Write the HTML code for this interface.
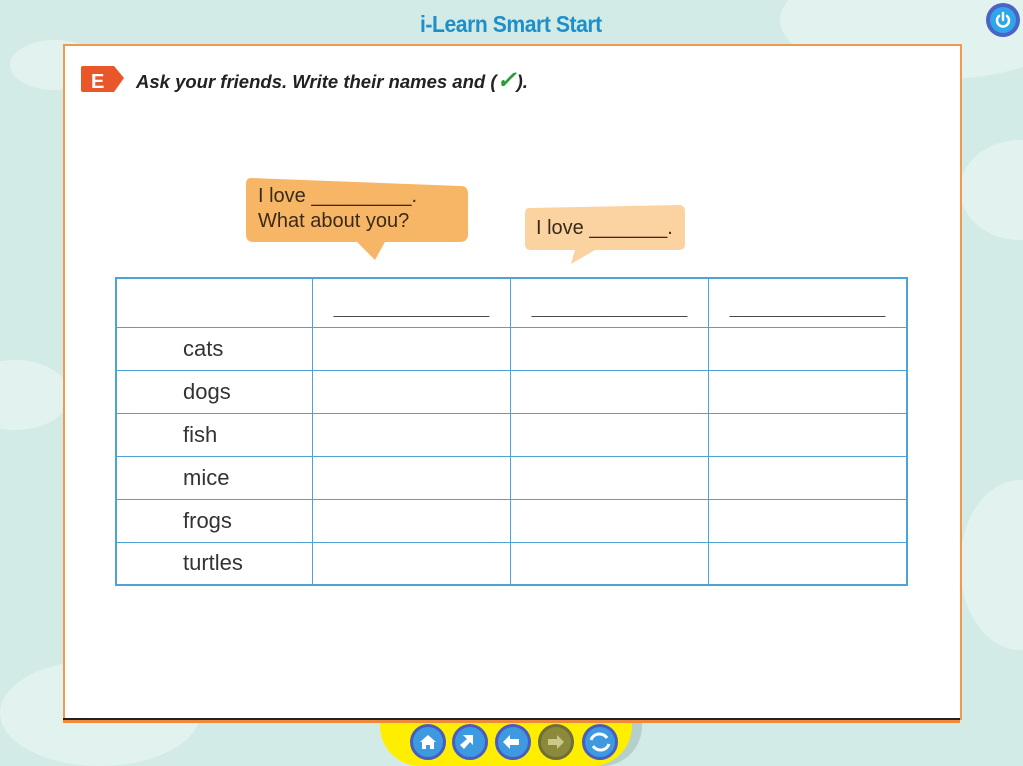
<!DOCTYPE html>
<html><head><style>
html,body{margin:0;width:1023px;height:766px;overflow:hidden}
body{background:#d3ebe6;position:relative;font-family:"Liberation Sans",sans-serif}
.cloud{position:absolute;background:#e2f2ef;border-radius:50%}
#panel{position:absolute;left:63px;top:44px;width:895px;height:674px;background:#fff;border:2px solid #ef9a4c;border-bottom:none}
#bline{position:absolute;left:63px;top:718px;width:897px;height:2px;background:#222}
#oline{position:absolute;left:63px;top:720px;width:897px;height:3px;background:#ef8a3a}
.title{position:absolute;left:420px;top:11px;font:bold 23px "Liberation Sans Narrow","Liberation Sans",sans-serif;color:#1f8fc9;letter-spacing:-0.5px;transform:scaleX(0.92);transform-origin:left}
.q{position:absolute;left:136px;top:66px;font:italic bold 18.5px "Liberation Sans",sans-serif;color:#222}
.bub{position:absolute;font-size:20px;color:#3b2a1a}
table{position:absolute;left:115px;top:277px;border-collapse:collapse;border:2px solid #4ba3d6}
td{border:1.5px solid #4ba3d6;padding:0;font-size:22px;color:#333}
.btn{position:absolute;top:724px;width:36px;height:36px;border-radius:50%;background:#3d9ae0;border:3px solid #4a5cbf;box-sizing:border-box}
</style></head><body>
<div class="cloud" style="left:780px;top:-40px;width:300px;height:120px"></div>
<div class="cloud" style="left:-40px;top:360px;width:110px;height:70px"></div>
<div class="cloud" style="left:960px;top:140px;width:120px;height:100px"></div>
<div class="cloud" style="left:960px;top:480px;width:120px;height:170px"></div>
<div class="cloud" style="left:0px;top:660px;width:200px;height:106px"></div>
<div class="cloud" style="left:10px;top:40px;width:90px;height:50px"></div>
<div class="title">i-Learn Smart Start</div>
<div style="position:absolute;left:986px;top:3px;width:34px;height:34px;border-radius:50%;background:#4a63c4"></div>
<div style="position:absolute;left:990px;top:7px;width:26px;height:26px;border-radius:50%;background:#2ea6ea"></div>
<svg style="position:absolute;left:994px;top:11px" width="18" height="18" viewBox="0 0 18 18"><path d="M5 5 A6 6 0 1 0 13 5" stroke="#fff" stroke-width="2.5" fill="none" stroke-linecap="round"/><path d="M9 2V9" stroke="#fff" stroke-width="2.5" stroke-linecap="round"/></svg>
<div id="panel"></div>
<div id="bline"></div><div id="oline"></div>
<svg style="position:absolute;left:80px;top:63px" width="48" height="32"><path d="M3 3H34L44 15L34 29H3Q1 29 1 27V5Q1 3 3 3Z" fill="#e8562a"/><text x="11" y="25" font-family="Liberation Sans" font-weight="bold" font-size="20" fill="#fff">E</text></svg>
<div class="q">Ask your friends. Write their names and (<span style="color:#2a9d3b;font-size:24px">✓</span>).</div>
<svg style="position:absolute;left:245px;top:176px" width="225" height="86"><path d="M6 2L216 10Q223 10 223 18V58Q223 66 215 66H140L130 84L112 66H8Q1 66 1 58V8Q1 2 6 2Z" fill="#f7b566"/></svg>
<div class="bub" style="left:258px;top:184px;line-height:25px">I love _________.<br>What about you?</div>
<svg style="position:absolute;left:523px;top:204px" width="164" height="60"><path d="M6 4L156 1Q162 1 162 8V40Q162 46 156 46H72L48 60L52 46H8Q2 46 2 40V10Q2 4 6 4Z" fill="#fbd3a1"/></svg>
<div class="bub" style="left:536px;top:217px">I love _______.</div>
<table>
<tr style="height:49px"><td style="width:195px"></td><td style="width:197px;text-align:center;vertical-align:bottom;padding-bottom:10px;font-size:14px">____________________</td><td style="width:197px;text-align:center;vertical-align:bottom;padding-bottom:10px;font-size:14px">____________________</td><td style="width:197px;text-align:center;vertical-align:bottom;padding-bottom:10px;font-size:14px">____________________</td></tr>
<tr style="height:43px"><td style="padding-left:66px">cats</td><td></td><td></td><td></td></tr>
<tr style="height:43px"><td style="padding-left:66px">dogs</td><td></td><td></td><td></td></tr>
<tr style="height:43px"><td style="padding-left:66px">fish</td><td></td><td></td><td></td></tr>
<tr style="height:43px"><td style="padding-left:66px">mice</td><td></td><td></td><td></td></tr>
<tr style="height:43px"><td style="padding-left:66px">frogs</td><td></td><td></td><td></td></tr>
<tr style="height:43px"><td style="padding-left:66px">turtles</td><td></td><td></td><td></td></tr>
</table>
<div style="position:absolute;left:388px;top:723px;width:254px;height:43px;background:#b5cfcc;border-radius:0 0 40px 40px"></div>
<div style="position:absolute;left:380px;top:723px;width:252px;height:43px;background:#ffee00;border-radius:0 0 40px 40px"></div>
<div class="btn" style="left:410px"></div>
<div class="btn" style="left:452px"></div>
<div class="btn" style="left:495px"></div>
<div class="btn" style="left:538px;background:#8a8a3a;border-color:#6e6e3a"></div>
<div class="btn" style="left:582px"></div>
<svg style="position:absolute;left:410px;top:724px" width="210" height="36">
<path d="M18 11L10 18H12V25H16V21H20V25H24V18H26Z" fill="#fff"/>
<path d="M53 11H63V21L60 18L54 25L50 21L57 15L53 11Z" fill="#fff"/>
<path d="M93 18L100 11V15H109V21H100V25Z" fill="#fff"/>
<path d="M154 18L147 11V15H138V21H147V25Z" fill="#c9c98a"/>
<path d="M181 16A9 9 0 0 1 197 14" stroke="#fff" stroke-width="3" fill="none"/><path d="M199 20A9 9 0 0 1 183 22" stroke="#fff" stroke-width="3" fill="none"/>
</svg>
</body></html>
